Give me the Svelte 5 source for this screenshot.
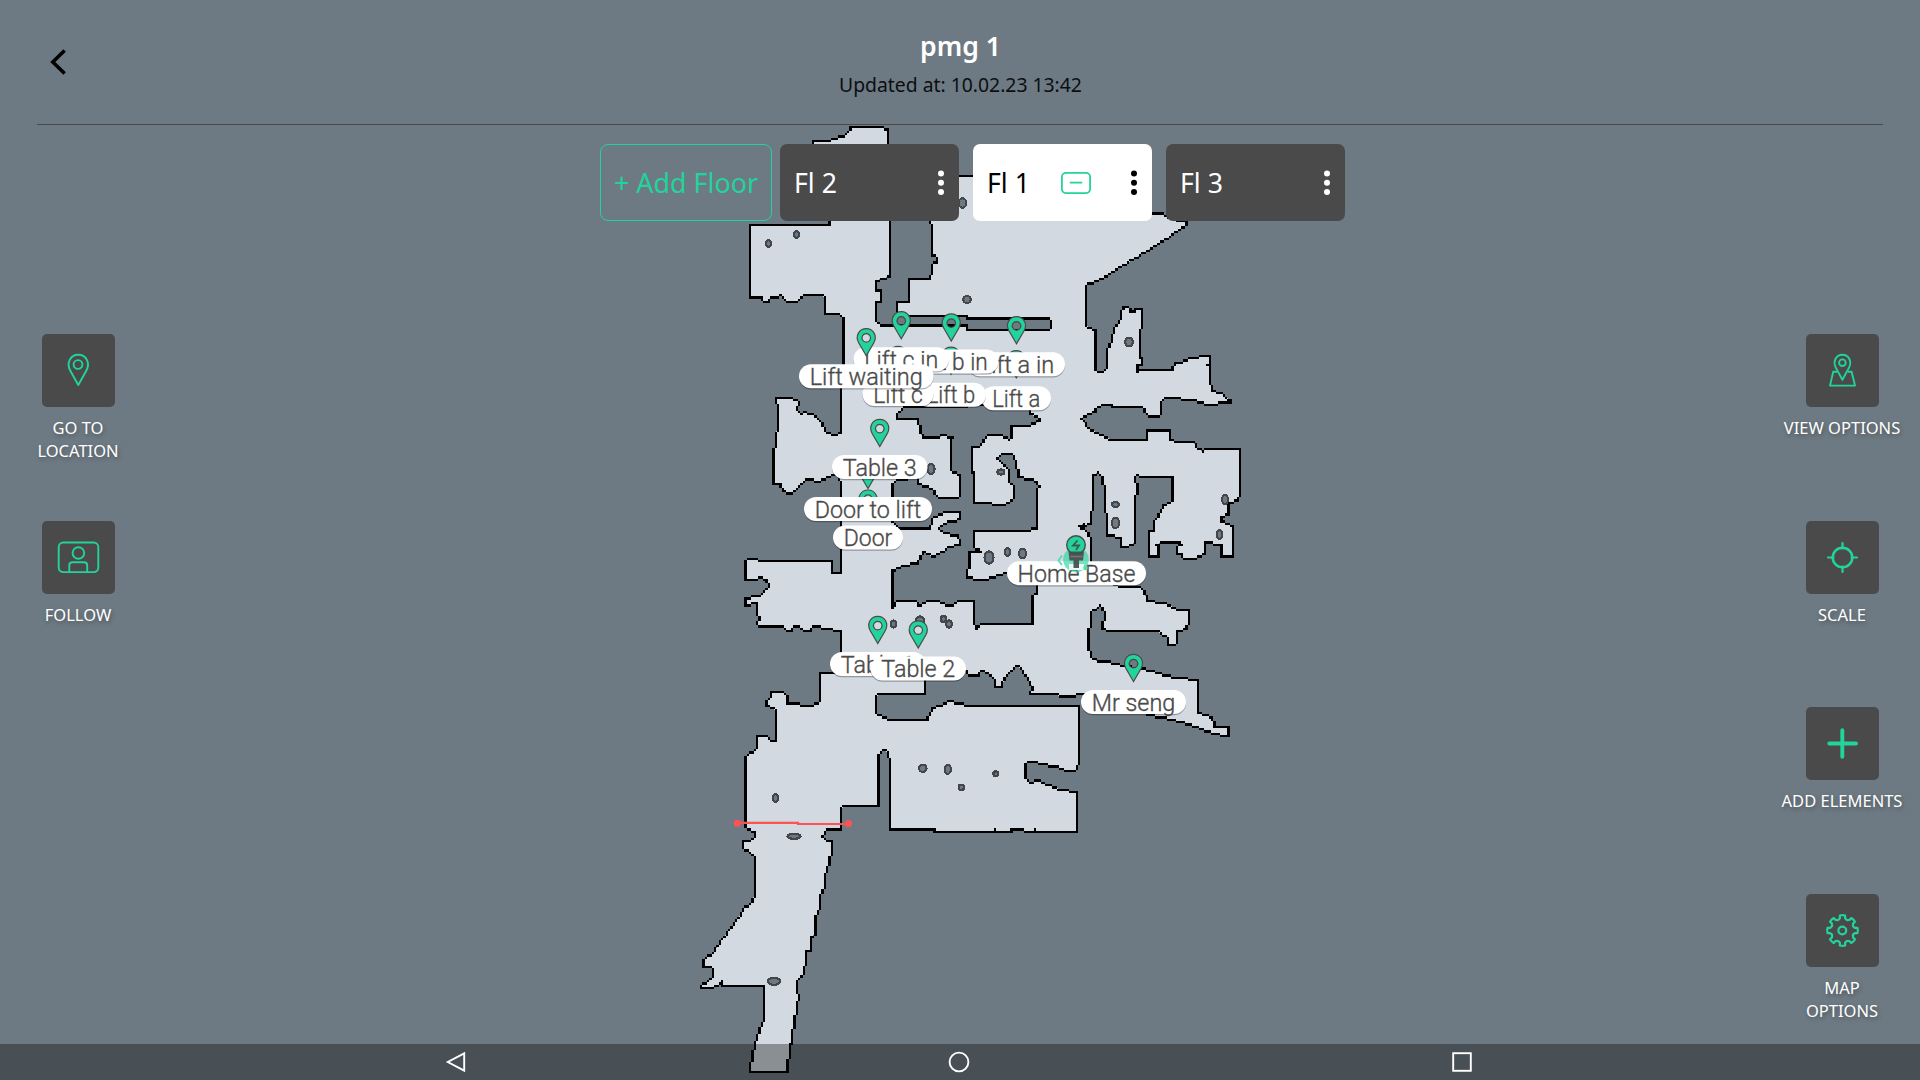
<script>
  // Occupancy grid resolution, in screen pixels per cell.
  const CELL = 7 / 3;

  const outline = [
    850,126, 854,128, 856,126, 881,126, 887,130, 887,143, 891,221, 891,260, 889,261, 889,276, 880,278, 877,282, 877,290, 880,291, 880,301,
    877,303, 877,321, 881,326, 967,326, 967,330, 1050,330, 1052,328, 1052,321, 1049,319, 967,319, 967,316, 898,316, 898,303, 908,303,
    908,280, 929,279, 931,273, 933,265, 936,262, 936,258, 933,256, 933,242, 931,240, 931,227, 929,221, 929,175, 959,175, 963,177, 973,177,
    1100,200, 1152,214, 1164,214, 1167,217, 1186,221, 1186,225, 1182,227, 1170,236, 1098,282, 1088,283, 1086,285, 1086,326, 1096,331, 1096,370,
    1098,372, 1102,372, 1107,367, 1107,350, 1113,340, 1115,328, 1120,323, 1121,313, 1123,307, 1129,307, 1130,311, 1135,311,
    1136,309, 1142,309, 1142,328, 1140,330, 1140,357, 1142,359, 1142,365, 1138,365, 1138,372, 1140,370, 1173,370, 1174,363,
    1181,362, 1190,359, 1199,358, 1201,356, 1210,356, 1210,365, 1207,366, 1209,368, 1210,380, 1212,390, 1222,392, 1227,397,
    1230,399, 1230,402, 1218,402, 1217,405, 1207,405, 1193,399, 1165,398, 1162,402, 1162,413, 1159,416, 1150,416, 1142,408,
    1113,407, 1112,405, 1103,405, 1097,408, 1095,412, 1088,413, 1082,419, 1088,428, 1097,433, 1112,439, 1146,439, 1147,430,
    1170,430, 1171,439, 1177,442, 1193,442, 1195,446, 1202,451, 1205,449, 1239,449, 1239,495, 1237,501, 1228,502, 1228,515,
    1222,517, 1221,521, 1228,523, 1234,527, 1234,556, 1222,556, 1222,545, 1205,543, 1205,555, 1197,556, 1195,558, 1185,558,
    1183,555, 1178,555, 1178,548, 1182,546, 1178,542, 1160,542, 1157,545, 1159,548, 1158,556, 1149,556, 1149,532, 1153,530,
    1154,522, 1160,513, 1163,506, 1170,503, 1172,498, 1172,477, 1140,477, 1138,474, 1135,477, 1135,482, 1138,483, 1137,493,
    1135,495, 1135,542, 1130,544, 1125,548, 1121,548, 1121,538, 1108,536, 1107,515, 1105,513, 1105,490, 1103,477, 1097,472,
    1094,475, 1093,509, 1091,512, 1091,525, 1085,526, 1083,523, 1079,527, 1087,532, 1091,538, 1091,575, 1122,586, 1140,587,
    1145,592, 1147,601, 1165,602, 1170,606, 1178,609, 1188,611, 1189,625, 1187,629, 1177,631, 1177,643, 1172,646, 1167,645,
    1167,637, 1160,633, 1157,630, 1133,630, 1128,632, 1123,630, 1115,630, 1110,632, 1107,631, 1103,628, 1105,613, 1100,606,
    1090,612, 1089,645, 1091,657, 1097,662, 1108,662, 1123,666, 1142,669, 1160,673, 1163,676, 1180,677, 1198,681, 1199,712,
    1205,716, 1213,717, 1215,726, 1229,727, 1229,737, 1223,737, 1207,732, 1190,724, 1173,720, 1150,715, 1083,695, 1067,696,
    1060,697, 1055,695, 1031,695, 1032,687, 1030,682, 1025,675, 1020,669, 1015,667, 1010,672, 1005,678, 1003,686, 996,686,
    995,680, 988,672, 982,671, 978,676, 970,675, 966,671, 926,672, 926,682, 924,695, 878,695, 875,699, 877,712, 887,720,
    928,720, 932,707, 945,704, 948,702, 960,703, 967,706, 1079,706, 1079,763, 1075,772, 1068,771, 1055,767, 1040,765,
    1037,761, 1028,762, 1026,767, 1026,778, 1031,782, 1038,781, 1057,787, 1060,789, 1077,793, 1077,832, 1036,832, 1035,829,
    1034,832, 1025,832, 1024,829, 1012,829, 1011,832, 996,832, 994,829, 993,832, 934,832, 934,829, 889,829, 889,763, 887,753,
    883,750, 878,754, 878,806, 844,806, 841,810, 841,829, 828,829, 822,836, 827,841, 831,841, 831,853, 829,863, 827,872,
    824,873, 824,885, 822,893, 819,895, 819,907, 817,913, 815,915, 815,935, 811,937, 810,950, 806,951, 806,965, 803,967,
    803,975, 797,982, 797,993, 799,994, 799,999, 796,1001, 796,1013, 794,1015, 794,1028, 792,1030, 792,1043, 789,1045,
    789,1059, 787,1061, 787,1072, 750,1072, 751,1065, 753,1057, 755,1045, 757,1037, 759,1030, 762,1022, 764,1021, 764,985,
    723,985, 721,982, 718,985, 714,985, 713,989, 701,989, 702,985, 707,982, 713,976, 713,970, 711,968, 703,968, 703,961,
    713,952, 723,938, 738,919, 743,908, 750,903, 755,895, 755,857, 750,853, 743,848, 743,841, 751,841, 755,836, 754,831,
    747,829, 746,826, 746,757, 755,751, 757,748, 757,737, 767,737, 772,741, 776,740, 776,710, 767,706, 766,702, 771,696,
    772,692, 783,692, 787,697, 788,703, 800,704, 801,706, 813,706, 819,702, 819,674, 832,674, 840,673, 840,630, 823,629,
    820,627, 813,627, 810,630, 804,630, 800,627, 795,627, 793,631, 787,631, 783,627, 759,627, 757,625, 759,617, 757,615,
    757,604, 752,602, 749,606, 745,606, 745,598, 760,597, 765,592, 769,586, 766,580, 760,577, 757,579, 745,579, 745,561,
    748,560, 757,560, 759,562, 831,562, 832,573, 840,573, 840,550, 841,482, 839,478, 833,474, 827,477, 820,482, 807,480,
    802,485, 792,494, 787,494, 783,490, 780,484, 773,483, 773,448, 776,447, 776,432, 778,428, 778,404, 775,402, 775,398,
    793,398, 798,402, 797,409, 801,413, 803,412, 813,414, 820,422, 827,433, 837,435, 842,432, 843,318, 838,314, 824,314,
    824,298, 821,296, 803,296, 797,301, 787,301, 783,297, 780,296, 777,298, 772,298, 769,301, 764,301, 762,298, 750,298,
    750,224, 823,224, 825,226, 830,224, 829,221, 813,200, 813,142, 830,142, 832,139, 843,136, 848,132
  ];

  const core = [
    903,407, 896,415, 898,418, 919,419, 920,433, 923,437, 938,437, 943,434, 952,437, 950,443, 950,470, 953,473, 961,474,
    961,495, 958,497, 940,497, 932,489, 918,485, 917,478, 896,480, 892,483, 892,522, 900,528, 917,529, 930,529, 933,518,
    943,513, 947,511, 959,511, 959,518, 950,522, 943,523, 938,528, 943,533, 958,535, 959,545, 948,548, 943,552, 933,556,
    922,552, 919,563, 902,565, 892,571, 892,603, 893,608, 896,600, 915,601, 917,606, 921,606, 928,600, 940,600, 947,606,
    952,606, 958,600, 973,601, 975,612, 973,625, 977,629, 981,625, 1032,625, 1033,597, 1036,595, 1036,576, 1007,572,
    993,577, 985,580, 977,581, 967,578, 966,572, 969,567, 970,553, 980,552, 973,548, 973,532, 1027,532, 1036,528, 1037,517,
    1038,488, 1040,486, 1037,482, 1018,478, 1017,460, 1012,453, 1003,453, 998,458, 1003,463, 1010,471, 1010,482, 1014,487,
    1013,497, 1010,502, 1003,504, 992,504, 990,502, 974,502, 974,473, 971.5,472, 971.5,447, 978,447, 985,437, 988,435,
    1002,435, 1008,439, 1012,435, 1012,426, 1030,426, 1040,421, 1039,419, 1031,415, 1031,405
  ];

  // Small obstacles: centre x, centre y, half width, half height (pixels).
  const obstacles = [
    [768.5, 243.5, 3.5, 4.6], [796.5, 234.5, 3.5, 4.6], [967, 299.5, 4.8, 4.6], [962.5, 203, 4.8, 5.8], [1129, 342, 4.8, 5.6],
    [931, 469, 4.6, 6], [1001, 472, 4.6, 3.6], [1115.5, 504.5, 4.6, 3.6], [1115.5, 523, 5, 6], [1225, 499.5, 4.2, 5.4],
    [1219.5, 534.5, 3.8, 5.6], [989, 557.5, 5.6, 7.2], [1007.5, 552, 3.5, 4.8], [1022.5, 553.5, 4.6, 5.8], [893.5, 624, 3.5, 4.6],
    [920, 621, 5.2, 5.6], [943.5, 619, 4, 4], [949, 624, 4, 4.8], [922.8, 768.3, 4.8, 4.8], [947.8, 769.3, 4.2, 5.6],
    [995.8, 773.8, 3.5, 3.5], [961.3, 787.3, 3.8, 3.8], [775.5, 798, 3.5, 4.8], [794, 836.3, 7.6, 3.6], [774, 981.3, 7.2, 4.8]
  ];

  const snap = (v) => Math.round(v / CELL - 0.5);
  const square = (x, y) => `M${x} ${y}h1v1h-1z`;

  function trace(points) {
    const cells = [];
    for (let i = 0; i < points.length; i += 2) cells.push([snap(points[i]), snap(points[i + 1])]);
    return cells;
  }

  function fillPath(cells) {
    return 'M' + cells.map(([x, y]) => `${x + 0.5} ${y + 0.5}`).join('L') + 'Z';
  }

  // Bresenham walk round the closed contour, one square per cell.
  function wallPath(cells) {
    let d = '';
    cells.forEach(([ax, ay], i) => {
      const [bx, by] = cells[(i + 1) % cells.length];
      const dx = Math.abs(bx - ax);
      const dy = -Math.abs(by - ay);
      const sx = ax < bx ? 1 : -1;
      const sy = ay < by ? 1 : -1;
      let x = ax;
      let y = ay;
      let err = dx + dy;
      while (x !== bx || y !== by) {
        d += square(x, y);
        const e = 2 * err;
        if (e >= dy) { err += dy; x += sx; }
        if (e <= dx) { err += dx; y += sy; }
      }
    });
    return d;
  }

  const outer = trace(outline);
  const inner = trace(core);
  const floorD = fillPath(outer) + fillPath(inner);
  const wallD = wallPath(outer) + wallPath(inner);

  // Map places in paint order: name, pill left, pill right, pill top.
  const places = [
    ['Lift a', 981.5, 1051, 386.3],
    ['Lift b', 916, 986, 382.8],
    ['Lift c', 862.5, 933.5, 382],
    ['Lift a in', 968, 1065, 352.3],
    ['Lift b in', 904, 998.5, 349.5],
    ['Lift c in', 853.5, 949, 347.3],
    ['Lift waiting', 799, 933.5, 364.3],
    ['Door', 833, 903, 525.6],
    ['Door to lift', 804, 932, 497],
    ['Table 3', 832, 927.5, 455],
    ['Table 1', 830, 925.5, 652],
    ['Table 2', 870.5, 966, 656.5],
    ['Mr seng', 1081, 1186, 690]
  ].map(([name, l, r, top]) => ({ name, l, w: r - l, top, cx: (l + r) / 2 }));

  const floors = [
    { name: 'Fl 2', active: false },
    { name: 'Fl 1', active: true },
    { name: 'Fl 3', active: false }
  ];

  const leftTools = [
    { icon: 'pin', label: ['GO TO', 'LOCATION'] },
    { icon: 'follow', label: ['FOLLOW'] }
  ];
  const rightTools = [
    { icon: 'view', label: ['VIEW OPTIONS'] },
    { icon: 'scale', label: ['SCALE'] },
    { icon: 'plus', label: ['ADD ELEMENTS'] },
    { icon: 'gear', label: ['MAP', 'OPTIONS'] }
  ];

  const polar = (r, deg) => {
    const a = (deg * Math.PI) / 180;
    return `${(36.5 + r * Math.cos(a)).toFixed(2)} ${(36.5 + r * Math.sin(a)).toFixed(2)}`;
  };
  let gearD = '';
  for (let k = 0; k < 8; k++) {
    const a = k * 45;
    gearD += `${k ? 'L' : 'M'}${polar(12, a - 16)}L${polar(12.6, a - 12)}L${polar(15.2, a - 10)}`;
    gearD += `Q${polar(15.8, a)} ${polar(15.2, a + 10)}L${polar(12.6, a + 12)}L${polar(12, a + 16)}Q${polar(10.8, a + 22.5)} ${polar(12, a + 29)}`;
  }
  gearD += 'Z';
</script>

{#snippet tool(t)}
  <button class="tool">
    <span class="tile">
      <svg viewBox="0 0 73 73" width="73" height="73">
        {#if t.icon === 'pin'}
          <path d="M36.3 51L28.6 37.2C24 29.5 28 20.8 36.3 20.8S48.6 29.5 44 37.2Z" />
          <circle cx="36" cy="30.5" r="4.4" />
        {:else if t.icon === 'follow'}
          <rect x="16.7" y="21.5" width="39.6" height="29.6" rx="4.5" />
          <circle cx="36.4" cy="32" r="5.8" />
          <path d="M27.3 51V44.5Q27.3 41.3 30.5 41.3H42Q45.2 41.3 45.2 44.5V51" />
        {:else if t.icon === 'view'}
          <path d="M36.4 45.8L30.2 34.4C26.3 27.5 30 20.8 36.4 20.8S46.5 27.5 42.6 34.4Z" />
          <circle cx="36.4" cy="28.7" r="3.3" />
          <path d="M31 37.7H27.2L24 51.6H49L45.6 37.7H41.8" />
        {:else if t.icon === 'scale'}
          <circle cx="36.5" cy="36.5" r="9.8" stroke-width="2.5" />
          <path d="M36.5 22v5.5M36.5 45.5v5.5M22 36.5h5.5M45.5 36.5h5.5" stroke-width="2.2" stroke-linecap="round" />
        {:else if t.icon === 'plus'}
          <path d="M36.3 23.2V49.8M23.3 36.5H50" stroke-width="3.9" stroke-linecap="round" />
        {:else}
          <path d={gearD} stroke-width="2.2" />
          <circle cx="36.3" cy="36.5" r="3.9" stroke-width="2.2" />
        {/if}
      </svg>
    </span>
    <span class="tool-label">
      {#each t.label as line}<span>{line}</span>{/each}
    </span>
  </button>
{/snippet}

<div class="screen">
  <svg class="map" viewBox="0 0 1920 1080" width="1920" height="1080">
    <g transform="scale({CELL})" shape-rendering="crispEdges">
      <path d={floorD} fill="#d2d9e1" fill-rule="evenodd" />
      <path d={wallD} fill="#000" />
    </g>
    <g shape-rendering="crispEdges" fill="#6e7a83" stroke="#43474b" stroke-width="2.2">
      {#each obstacles as [cx, cy, rx, ry]}
        <ellipse {cx} {cy} rx={rx - 1.1} ry={ry - 1.1} />
      {/each}
    </g>

    <path d="M737 822.8H798V824H848" fill="none" stroke="#ff5252" stroke-width="2.2" />
    <circle cx="737.3" cy="823.3" r="3.5" fill="#ff5252" />
    <circle cx="848.5" cy="823.5" r="3.5" fill="#ff5252" />

    {#each places as p}
      <g transform="translate({p.cx} {p.top})">
        <path class="marker" fill-rule="evenodd" d="M0-8.5L-7.6-21.5C-11.4-28.5-7-35.6 0-35.6S11.4-28.5 7.6-21.5ZM0-30.7a4.3 4.3 0 1 0 .01 0Z" />
      </g>
      <rect class="pill-shadow" x={p.l} y={p.top + 1.2} width={p.w} height="24" rx="12" />
      <rect class="pill" x={p.l} y={p.top} width={p.w} height="24" rx="12" />
      <text class="place" x={p.cx} y={p.top + 20.5} textLength={p.w - 21.5} lengthAdjust="spacingAndGlyphs">{p.name}</text>
    {/each}

    <rect class="pill-shadow" x="1007" y="562.5" width="139" height="24" rx="12" />
    <rect class="pill" x="1007" y="561.3" width="139" height="24" rx="12" />
    <text class="place" x="1076.5" y="582" textLength="118" lengthAdjust="spacingAndGlyphs">Home Base</text>
    <circle cx="1076" cy="559.5" r="12.8" fill="#22d39b" opacity=".62" />
    <path d="M1069 570V564H1084V570Z" fill="#fff" opacity=".85" />
    <path d="M1062 555.5L1058.5 560.5L1062 565" fill="none" stroke="#5bd8b0" stroke-width="1.8" />
    <circle cx="1085.5" cy="568" r="2.3" fill="#5bd8b0" />
    <circle cx="1076" cy="545" r="9.3" fill="#22d39b" stroke="#4a4a4a" stroke-width="1.4" />
    <path d="M1077.5 540.5L1073 545.5H1079L1076 550" fill="none" stroke="#3d5a50" stroke-width="1.8" />
    <path d="M1068.5 551.5H1084L1083 560.5H1079V568H1073.5V560.5H1069.5Z" fill="#484c4e" opacity=".92" />
    <path d="M1070.5 556.5H1082.5" stroke="#70777a" stroke-width="1.5" />
  </svg>

  <header class="header">
    <button class="back" aria-label="Back">
      <svg viewBox="0 0 16 26" width="16" height="26">
        <path d="M14.6 1.5L2.8 13L14.6 24.5" fill="none" stroke="#000" stroke-width="3.6" />
      </svg>
    </button>
    <div class="heading">
      <h1>pmg 1</h1>
      <p>Updated at: 10.02.23 13:42</p>
    </div>
  </header>

  <nav class="floors">
    <button class="add">+ Add Floor</button>
    {#each floors as f}
      <button class="floor" class:active={f.active}>
        <span>{f.name}</span>
        {#if f.active}
          <svg class="badge" viewBox="0 0 30 22" width="30" height="22">
            <rect x=".9" y=".9" width="28.2" height="20.2" rx="4" />
            <path d="M9.5 10.6h11" stroke-linecap="round" />
          </svg>
        {/if}
        <svg class="dots" viewBox="0 0 6 26" width="6" height="26">
          <circle cx="3" cy="3.5" r="3" />
          <circle cx="3" cy="12.8" r="3" />
          <circle cx="3" cy="22" r="3" />
        </svg>
      </button>
    {/each}
  </nav>

  <main class="sides">
    <div class="tools">{#each leftTools as t}{@render tool(t)}{/each}</div>
    <div class="tools">{#each rightTools as t}{@render tool(t)}{/each}</div>
  </main>

  <footer class="navbar">
    <svg viewBox="0 0 22 22" width="22" height="22"><path d="M19.2 2.3V19.7L2.8 11Z" /></svg>
    <svg viewBox="0 0 22 22" width="22" height="22"><circle cx="11" cy="11" r="9.4" /></svg>
    <svg viewBox="0 0 22 22" width="22" height="22"><rect x="2.2" y="2.2" width="17.6" height="17.6" /></svg>
  </footer>
</div>

<style>
  :global(body) {
    background: #6e7a83;
    overflow: hidden;
  }

  .screen {
    position: relative;
    display: flex;
    flex-direction: column;
    width: 1920px;
    height: 1080px;
    overflow: hidden;
    background: #6e7a83;
    font-family: 'Noto Sans', 'Open Sans', sans-serif;
    color: #fff;
  }

  button {
    margin: 0;
    padding: 0;
    border: 0;
    background: none;
    color: inherit;
    font: inherit;
  }

  svg {
    display: block;
  }

  .map {
    position: absolute;
    inset: 0;
  }

  .marker {
    fill: #22d39b;
    stroke: #4a4a4a;
    stroke-width: 1.2;
  }

  .pill {
    fill: #fff;
  }

  .pill-shadow {
    fill: #000;
    opacity: 0.3;
  }

  .place {
    font-family: Roboto, sans-serif;
    font-size: 23px;
    font-weight: 300;
    fill: #4a4a4a;
    stroke: #4a4a4a;
    stroke-width: 0.35px;
    text-anchor: middle;
  }

  .header,
  .floors,
  .sides,
  .navbar {
    position: relative;
    flex-shrink: 0;
  }

  .header {
    display: grid;
    grid-template-columns: 60px 1fr 60px;
    height: 124px;
    margin: 0 37px;
    border-bottom: 1px solid #4a4a4a;
    background: #6e7a83;
  }

  .back {
    align-self: start;
    justify-self: start;
    margin: 49px 0 0 13px;
  }

  .heading {
    padding-left: 1px;
    text-align: center;
  }

  h1 {
    margin: 27px 0 0;
    font-size: 26.6px;
    font-weight: 600;
    line-height: 38px;
  }

  p {
    margin: 6px 0 0;
    color: #0c0e10;
    font-size: 19.35px;
    line-height: 28px;
  }

  .floors {
    display: flex;
    height: 77px;
    margin: 19px 0 0 600px;
    font-size: 26.67px;
  }

  .add {
    width: 172px;
    margin-right: 8px;
    border: 1px solid #22d39b;
    border-radius: 8px;
    color: #22d39b;
    font-size: 26.9px;
    white-space: nowrap;
  }

  .floor {
    display: flex;
    align-items: center;
    width: 179px;
    margin-right: 14px;
    padding: 0 15px 0 14px;
    border-radius: 7px;
    background: #4a4a4a;
    white-space: nowrap;
  }

  .floor.active {
    background: #fff;
    color: #000;
  }

  .badge {
    margin-left: 31px;
    fill: none;
    stroke: #22d39b;
    stroke-width: 1.8;
  }

  .dots {
    margin-left: auto;
    fill: currentColor;
  }

  .sides {
    display: flex;
    height: 823px;
    box-sizing: border-box;
    justify-content: space-between;
    padding: 113px 3px 0 3px;
  }

  .tools {
    display: grid;
    grid-auto-rows: 186.7px;
    align-content: start;
    width: 150px;
  }

  .tool {
    display: flex;
    flex-direction: column;
    align-items: center;
  }

  .tile {
    border-radius: 5px;
    background: #4a4a4a;
  }

  .tile svg {
    fill: none;
    stroke: #22d39b;
    stroke-width: 1.9;
    stroke-linejoin: round;
  }

  .tool-label {
    display: flex;
    flex-direction: column;
    margin-top: 9px;
    font-size: 16.5px;
    line-height: 23px;
    text-shadow: 1px 2px 4px rgba(0, 0, 0, 0.35);
    white-space: nowrap;
  }

  .navbar {
    display: flex;
    justify-content: space-between;
    align-items: center;
    height: 36px;
    padding: 0 447px 0 445px;
    box-sizing: border-box;
    background: rgba(0, 0, 0, 0.34);
  }

  .navbar svg {
    fill: none;
    stroke: #fff;
    stroke-width: 1.9;
  }
</style>
